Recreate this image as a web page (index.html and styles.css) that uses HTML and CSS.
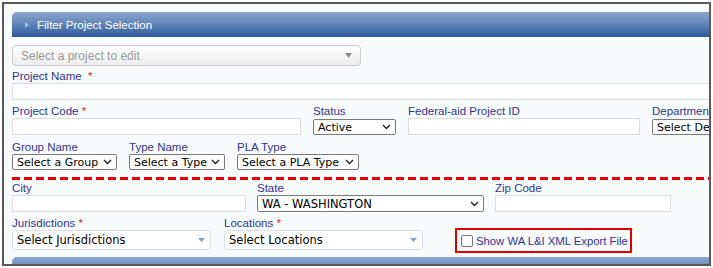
FILE: index.html
```html
<!DOCTYPE html>
<html lang="en">
<head>
    <meta charset="UTF-8">
    <title>Project Setup</title>
    <link rel="stylesheet" href="styles.css">
</head>
<body>
<div class="frame">
    <div class="panel-head"><span class="caret"></span>Filter Project Selection</div>

    <div class="picker">
        <span>Select a project to edit</span>
        <svg width="7" height="5" viewBox="0 0 7 5"><path d="M0 0h7L3.5 5z" fill="#8a8a8a"/></svg>
    </div>

    <div class="field">
        <label>Project Name &nbsp;<b>*</b></label>
        <div class="input wide"></div>
    </div>

    <div class="row r2">
        <div class="field"><label>Project Code <b>*</b></label><div class="input w-code"></div></div>
        <div class="field"><label>Status</label>
            <div class="select w-status"><span>Active</span><svg width="9" height="6" viewBox="0 0 9 6"><path d="M1 1l3.5 3.5L8 1" stroke="#222" stroke-width="1.4" fill="none"/></svg></div>
        </div>
        <div class="field"><label>Federal-aid Project ID</label><div class="input w-fed"></div></div>
        <div class="field"><label>Department</label>
            <div class="select w-dept"><span>Select Department</span></div>
        </div>
    </div>

    <div class="row r3">
        <div class="field"><label>Group Name</label>
            <div class="select w-group"><span>Select a Group</span><svg width="9" height="6" viewBox="0 0 9 6"><path d="M1 1l3.5 3.5L8 1" stroke="#222" stroke-width="1.4" fill="none"/></svg></div>
        </div>
        <div class="field"><label>Type Name</label>
            <div class="select w-type"><span>Select a Type</span><svg width="9" height="6" viewBox="0 0 9 6"><path d="M1 1l3.5 3.5L8 1" stroke="#222" stroke-width="1.4" fill="none"/></svg></div>
        </div>
        <div class="field"><label>PLA Type</label>
            <div class="select w-pla"><span>Select a PLA Type</span><svg width="9" height="6" viewBox="0 0 9 6"><path d="M1 1l3.5 3.5L8 1" stroke="#222" stroke-width="1.4" fill="none"/></svg></div>
        </div>
    </div>

    <div class="dashes"></div>

    <div class="row r4">
        <div class="field"><label>City</label><div class="input w-city"></div></div>
        <div class="field"><label>State</label>
            <div class="select w-state"><span>WA - WASHINGTON</span><svg width="9" height="6" viewBox="0 0 9 6"><path d="M1 1l3.5 3.5L8 1" stroke="#222" stroke-width="1.4" fill="none"/></svg></div>
        </div>
        <div class="field"><label>Zip Code</label><div class="input w-zip"></div></div>
    </div>

    <div class="row r5">
        <div class="field"><label>Jurisdictions <b>*</b></label>
            <div class="chosen"><span>Select Jurisdictions</span><svg width="7" height="4" viewBox="0 0 7 4"><path d="M0 0h7L3.5 4z" fill="#7f9fc6"/></svg></div>
        </div>
        <div class="field"><label>Locations <b>*</b></label>
            <div class="chosen"><span>Select Locations</span><svg width="7" height="4" viewBox="0 0 7 4"><path d="M0 0h7L3.5 4z" fill="#7f9fc6"/></svg></div>
        </div>
        <div class="export-box">
            <span class="check"></span>Show WA L&amp;I XML Export File
        </div>
    </div>

    <div class="panel-head"><span class="caret"></span>HUD Section</div>
</div>
</body>
</html>
```

FILE: styles.css
```css
/* page frame */
body {
    margin: 0;
    background: #FFFFFF;
    font-family: 'Liberation Sans', Arial, sans-serif;
}

.frame {
    box-sizing: border-box;
    margin: 2px;
    width: 709px;
    height: 264px;
    border: 2px solid #5a5a5a;
    padding: 8px 0 0 8px;
    background: #F8FBFB;
    overflow: hidden;
}

.panel-head {
    display: flex;
    align-items: center;
    height: 25px;
    padding-left: 13px;
    border-radius: 5px 0 0 0;
    background: linear-gradient(#8CA7CF, #5B7FB5 55%, #2E5A98);
    color: #FFFFFF;
    font-size: 11.5px;
    white-space: nowrap;
}

.caret {
    width: 0;
    height: 0;
    margin-right: 8px;
    border-top: 3px solid transparent;
    border-bottom: 3px solid transparent;
    border-left: 4px solid #A9BEDD;
}

.picker {
    box-sizing: border-box;
    display: flex;
    justify-content: space-between;
    align-items: center;
    width: 349px;
    height: 21px;
    margin-top: 8px;
    padding: 0 8px 0 8px;
    border: 1px solid #CCCCCC;
    border-radius: 4px;
    background: linear-gradient(#FFFFFF, #EDEDED);
    color: #9A9A9A;
    font-size: 12px;
}

.field {
    display: flex;
    flex-direction: column;
    flex-shrink: 0;
    margin-top: 3px;
}

.row .field {
    margin-top: 0;
}

label {
    height: 14px;
    line-height: 14px;
    font-size: 11.5px;
    color: #313393;
    white-space: nowrap;
}

label b {
    font-weight: normal;
    color: #E02424;
}

.input {
    box-sizing: border-box;
    height: 17px;
    border: 1px solid #DCDCDC;
    background: #FFFFFF;
}

.input.wide {
    width: 720px;
}

.row {
    display: flex;
    gap: 12px;
}

.r2 { margin-top: 4px; }
.r3 { margin-top: 5px; }
.r4 { margin-top: 1px; gap: 11px; }
.r5 { margin-top: 4px; gap: 13px; }

.select {
    box-sizing: border-box;
    display: flex;
    justify-content: space-between;
    align-items: center;
    height: 16px;
    padding: 0 4px 0 4px;
    border: 1px solid #7A7A7A;
    border-radius: 2px;
    background: #FFFFFF;
    font-family: 'DejaVu Sans', Verdana, sans-serif;
    font-size: 11px;
    color: #000000;
    white-space: nowrap;
    overflow: hidden;
}

.select svg {
    flex-shrink: 0;
}

.w-code { width: 289px; }
.w-status { width: 83px; margin-top: 1px; }
.w-fed { width: 232px; }
.w-dept { width: 120px; margin-top: 1px; }
.w-group { width: 105px; }
.w-type { width: 96px; }
.w-pla { width: 122px; }
.w-city { width: 234px; }
.w-state { width: 227px; height: 17px; font-size: 11.5px; }
.w-zip { width: 176px; }

.dashes {
    height: 3px;
    margin-top: 7px;
    background: repeating-linear-gradient(90deg, #E40000 0 8px, transparent 8px 12px);
}

.chosen {
    box-sizing: border-box;
    display: flex;
    justify-content: space-between;
    align-items: center;
    width: 199px;
    height: 20px;
    padding: 0 5px 0 4px;
    border: 1px solid #D6DFEA;
    border-radius: 4px;
    background: #FFFFFF;
    font-family: 'DejaVu Sans', Verdana, sans-serif;
    font-size: 11.5px;
    color: #000000;
}

.export-box {
    box-sizing: border-box;
    display: flex;
    align-items: center;
    flex-shrink: 0;
    width: 177px;
    height: 25px;
    margin: 12px 0 0 19px;
    padding-left: 4px;
    border: 2px solid #E00000;
    font-size: 11.3px;
    color: #313393;
    white-space: nowrap;
}

.check {
    box-sizing: border-box;
    flex-shrink: 0;
    width: 12px;
    height: 12px;
    margin-right: 3px;
    border: 1px solid #777777;
    border-radius: 2px;
    background: #FFFFFF;
}

.frame > .panel-head:last-child {
    margin-top: 4px;
}
```
